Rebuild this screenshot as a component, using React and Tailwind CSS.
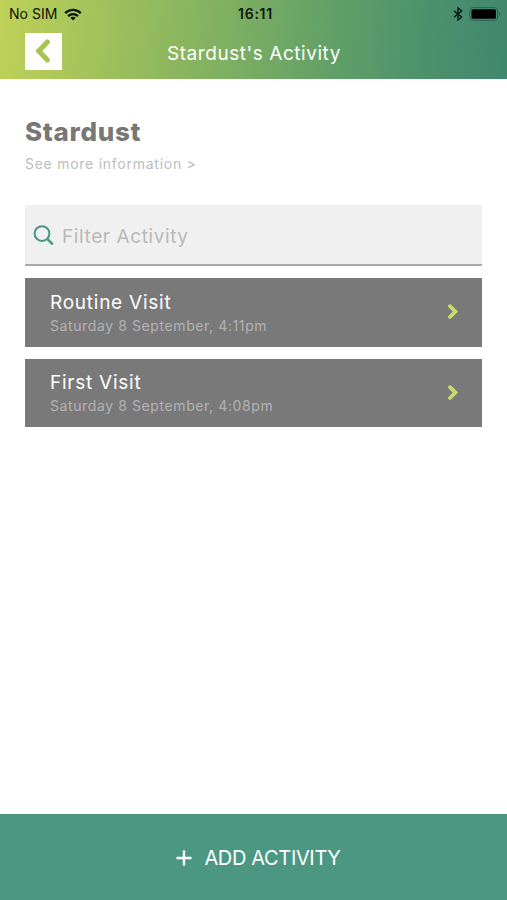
import React from 'react';

const visits = [
  { id: 1, title: 'Routine Visit', date: 'Saturday 8 September, 4:11pm' },
  { id: 2, title: 'First Visit', date: 'Saturday 8 September, 4:08pm' },
];

const WifiIcon = () => (
  <svg width="18" height="13" viewBox="0 0 18 13" fill="none" stroke="#0c1508" strokeWidth="2.3">
    <path d="M1.2 5.1C5.5.7 12.5.7 16.8 5.1" />
    <path d="M4.1 8.1c2.8-2.7 7-2.7 9.8 0" />
    <path d="M9 12.4 6.3 9.8c1.5-1.4 3.9-1.4 5.4 0Z" fill="#0c1508" stroke="none" />
  </svg>
);

const BluetoothIcon = () => (
  <svg width="10" height="14" viewBox="0 0 10 14" fill="none" stroke="#0d241b" strokeWidth="1.5">
    <path d="M1 3.8 8.6 10 5 13V1l3.6 3L1 10.2" />
  </svg>
);

const BatteryIcon = () => (
  <svg width="33" height="14" viewBox="0 0 33 14">
    <rect x="0.9" y="0.6" width="27.6" height="12.8" rx="3" fill="none" stroke="#2c6250" strokeWidth="1" />
    <rect x="2.5" y="2.2" width="24.4" height="9.6" rx="1.6" fill="#000" />
    <path d="M30 5v4c1.6-.6 1.6-3.4 0-4Z" fill="#2c6250" />
  </svg>
);

const SearchIcon = () => (
  <svg width="22" height="22" viewBox="0 0 22 22" fill="none" stroke="#4a9883" strokeWidth="2.1">
    <circle cx="9" cy="8.6" r="7.4" />
    <path d="m14.2 13.8 5.6 5.6" strokeWidth="2.5" />
  </svg>
);

const ChevronIcon = () => (
  <svg width="12" height="18" viewBox="0 0 12 18" fill="none" stroke="#c7dc68" strokeWidth="3.8">
    <path d="M2.9 3.2 8.4 8.6l-5.5 5.4" strokeLinecap="round" />
  </svg>
);

const App = () => {
  return (
    <div className="flex h-[900px] w-[507px] flex-col overflow-hidden bg-white font-['Inter','Liberation_Sans',sans-serif] whitespace-nowrap">
      {/* Header */}
      <header className="h-[79px] bg-[linear-gradient(94deg,#bfd158_0%,#9ec05c_22%,#79ac63_49%,#5d9e68_68%,#4d916c_84%,#41876f_100%)]">
        <div className="flex h-7 items-center pl-[9px] pr-[5px] text-[#0c1508]">
          <div className="flex flex-1 items-center gap-[6px]">
            <span className="text-sm tracking-[0.05px]">No SIM</span>
            <WifiIcon />
          </div>
          <span className="text-sm font-semibold tracking-[0.75px]">16:11</span>
          <div className="flex flex-1 items-center justify-end gap-[6px]">
            <BluetoothIcon />
            <BatteryIcon />
          </div>
        </div>
        <div className="flex h-[50px] items-center px-[25px]">
          <button className="mb-1 flex h-[37px] w-[37px] items-center justify-center bg-white">
            <svg width="16" height="24" viewBox="0 0 16 24" fill="none" stroke="#a6c450" strokeWidth="5" strokeLinecap="round">
              <path d="M11.4 3 2.8 12l8.6 9" />
            </svg>
          </button>
          <h1 className="flex-1 pt-0.5 pr-[36px] text-center text-[19px] tracking-[0.55px] text-white">Stardust's Activity</h1>
        </div>
      </header>

      {/* Client details and visits */}
      <main className="flex-1 px-[25px] pt-[35px]">
        <h2 className="pt-px text-[26px] leading-[34px] font-extrabold tracking-[0.7px] text-[#777]">Stardust</h2>
        <p className="mt-[3px] text-sm leading-6 tracking-[0.74px] text-[#bdbdbd]">See more information &gt;</p>

        <div className="mt-[29px] flex h-[61px] items-center border-b-2 border-[#aaa] bg-[#f0f0f0] pt-0.5 pl-2">
          <SearchIcon />
          <span className="mt-[3px] ml-[7px] text-[19px] tracking-[0.6px] text-[#b9b9b9]">Filter Activity</span>
        </div>

        <div className="mt-3 space-y-3">
          {visits.map((v) => (
            <div key={v.id} className="flex h-[68.5px] items-center justify-between bg-[#797979] pl-[25px] pr-[23px]">
              <div className="pt-[3px]">
                <p className="text-[19px] leading-6 tracking-[0.75px] text-white">{v.title}</p>
                <p className="text-sm leading-[22px] tracking-[0.6px] text-[#b2b2b2]">{v.date}</p>
              </div>
              <ChevronIcon />
            </div>
          ))}
        </div>
      </main>

      <button className="flex h-[86px] items-center justify-center gap-3 bg-[#4c9782] pt-0.5 pl-[10px] text-white">
        <svg width="16" height="16" viewBox="0 0 16 16" stroke="currentColor" strokeWidth="2.4">
          <path d="M8 .5v15M.5 8h15" />
        </svg>
        <span className="text-xl tracking-[-0.35px]">ADD ACTIVITY</span>
      </button>
    </div>
  );
};

export default App;
